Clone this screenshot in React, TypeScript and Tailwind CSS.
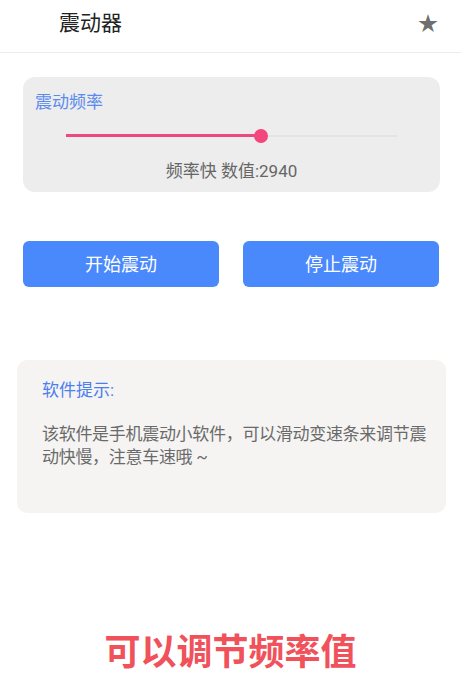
import React, { useState } from 'react';

const FONT = "font-['Roboto','Noto_Sans_CJK_SC',sans-serif]";
const MAX = 5000;

const Slider: React.FC<{ value: number }> = ({ value }) => {
  const pct = (value / MAX) * 100;
  return (
    <div className="relative mx-[43px] h-[14px]">
      <div className="absolute left-0 right-0 top-[6px] h-[2px] bg-[#e4e4e4]" />
      <div className="absolute left-0 top-[5px] h-[3px] bg-[#ec4a7e]" style={{ width: `${pct}%` }} />
      <div
        className="absolute top-0 h-[14px] w-[14px] -translate-x-1/2 rounded-full bg-[#f2467c]"
        style={{ left: `${pct}%` }}
      />
    </div>
  );
};

const App: React.FC = () => {
  const [value] = useState(2940);
  return (
    <div className={`${FONT} min-h-[698px] w-[461px] bg-white`}>
      <div className="flex h-[53px] items-center justify-between border-b border-[#ececec] pb-[4px] pl-[59px] pr-[23px]">
        <span className="text-[21px] text-[#222]">震动器</span>
        <span className="text-[20px] text-[#6f6f6f]">★</span>
      </div>

      <div className="ml-[23px] mt-[24px] h-[115px] w-[417px] rounded-[12px] bg-[#ededed] pt-[14px]">
        <div className="pl-[12px] text-[17px] leading-[22px] text-[#5b8bef]">震动频率</div>
        <div className="mt-[16px]">
          <Slider value={value} />
        </div>
        <div className="mt-[16px] text-center text-[17px] leading-[24px] text-[#666]">
          频率快 数值:{value}
        </div>
      </div>

      <div className="mt-[49px] flex gap-[24px] pl-[23px]">
        <button className="h-[46px] w-[196px] rounded-[6px] bg-[#4a89fb] text-[18px] text-white">开始震动</button>
        <button className="h-[46px] w-[196px] rounded-[6px] bg-[#4a89fb] text-[18px] text-white">停止震动</button>
      </div>

      <div className="ml-[17px] mt-[73px] h-[153px] w-[429px] rounded-[10px] bg-[#f5f4f2] pl-[25px] pr-[4px] pt-[18px]">
        <div className="text-[17px] leading-[24px] text-[#4b7ef0]">软件提示:</div>
        <p className="mt-[21px] text-[17px] leading-[23px] tracking-[-0.3px] text-[#6a6a6a]">
          该软件是手机震动小软件，可以滑动变速条来调节震动快慢，注意车速哦 ~
        </p>
      </div>

      <div className="mt-[116px] text-center text-[36px] font-bold leading-[48px] text-[#f0515a]">可以调节频率值</div>
    </div>
  );
};

export default App;
